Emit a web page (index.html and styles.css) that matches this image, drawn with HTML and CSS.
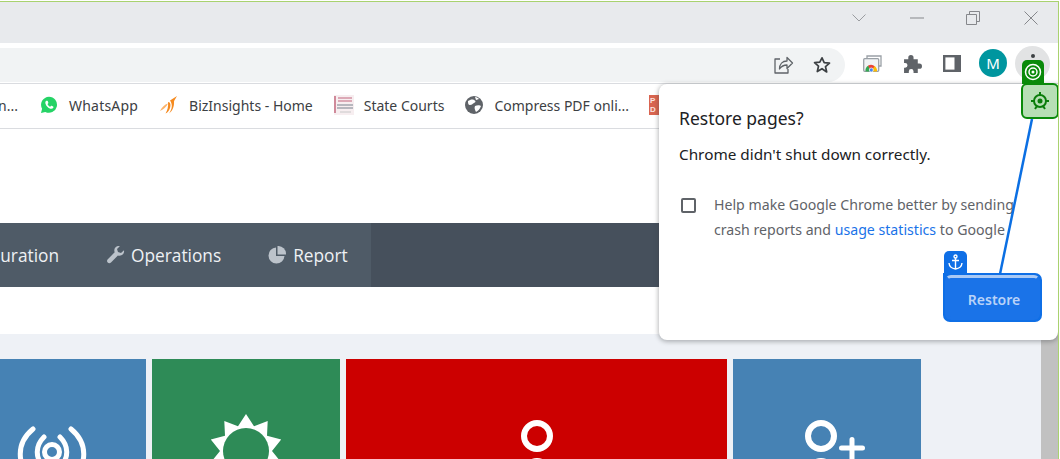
FILE: index.html
```html
<!DOCTYPE html>
<html>
  <head>
    <title>Restore pages?</title>
    <meta name="viewport" content="width=device-width, initial-scale=1.0" />
    <link rel="stylesheet" href="styles.css">
  </head>
  <body>
    <div class="window">
      <!-- title bar -->
      <div class="titlebar">
        <svg class="tb-chevron" width="16" height="10" viewBox="0 0 16 10"><path d="M1.500 1.500 8 8l6.500-6.500" fill="none" stroke="#9a9ca0" stroke-width="1"/></svg>
        <svg class="tb-min" width="14" height="2" viewBox="0 0 14 2"><path d="M0 1h14" stroke="#85878b" stroke-width="1"/></svg>
        <svg class="tb-restore" width="14" height="14" viewBox="0 0 14 14"><path d="M.5 3.500h10v10H.5zM3.500 3.500v-3h10v10h-3" fill="none" stroke="#85878b" stroke-width="1"/></svg>
        <svg class="tb-close" width="14" height="14" viewBox="0 0 14 14"><path d="m.5.5 13 13M13.500.5l-13 13" fill="none" stroke="#85878b" stroke-width="1"/></svg>
      </div>

      <!-- toolbar -->
      <div class="toolbar">
        <div class="omnibox">
          <svg class="omni-share" width="22" height="20" viewBox="0 0 22 20"><path d="M8 4H3v14h13v-4M7.500 14c0-5 3-8 7.500-8V2.500l5.500 5.500-5.500 5.500V10c-3.500 0-5.500 1-7.500 4z" fill="none" stroke="#5f6368" stroke-width="1.300" stroke-linejoin="round"/></svg>
          <svg class="omni-star" width="18" height="18" viewBox="0 0 18 18"><path d="m9 1.800 2.200 4.900 5.300.5-4 3.500 1.200 5.300L9 12.700l-4.700 2.800 1.200-5.300-4-3.500 5.300-.5z" fill="none" stroke="#3c4043" stroke-width="1.700" stroke-linejoin="round"/></svg>
        </div>
        <svg class="tool-media" width="19" height="17" viewBox="0 0 19 17">
          <path d="M4 3V1h14v10h-2" fill="none" stroke="#9aa0a6" stroke-width="1.300"/>
          <rect x=".7" y="3.700" width="15" height="12.600" rx="1" fill="#f1f3f4" stroke="#9aa0a6" stroke-width="1.300"/>
          <path d="M2.500 16.500a6 6 0 0 1 3-6l2.500 6z" fill="#34a853"/>
          <path d="M5 10.800a6 6 0 0 1 7 .7l-3.500 5z" fill="#ea4335"/>
          <path d="M11.500 11a6 6 0 0 1 2.500 5.500H8.500z" fill="#fbbc04"/>
          <circle cx="8.300" cy="15" r="2" fill="#4285f4" stroke="#fff" stroke-width=".7"/>
        </svg>
        <svg class="tool-ext" width="19" height="19" viewBox="0 0 18 18"><path d="M1 5h4V3.500a2.500 2.500 0 0 1 5 0V5h4v4h1.500a2.500 2.500 0 0 1 0 5H14v4h-4v-1.500a2.200 2.200 0 0 0-4.500 0V18H1v-5h1a2.200 2.200 0 0 0 0-4.500H1z" fill="#5f6368"/></svg>
        <svg class="tool-side" width="18" height="17" viewBox="0 0 18 17"><rect x="1.200" y="1.200" width="15.600" height="14.600" fill="#fff" stroke="#5f6368" stroke-width="2.400"/><rect x="11.500" y="1" width="6" height="15" fill="#5f6368"/></svg>
        <div class="avatar">M</div>
        <div class="menu-btn"><span class="menu-dot"></span></div>
      </div>

      <!-- bookmarks -->
      <div class="bookmarks">
        <div class="bm-cut">n...</div>
        <div class="bm bm-whatsapp">
          <svg width="18" height="18" viewBox="0 0 18 18"><path d="M9 .8a8 8 0 0 0-6.900 12L1 17l4.300-1.100A8 8 0 1 0 9 .8z" fill="#25d366"/><path d="M6.300 4.800c-.9.600-1.200 1.700-.8 3 .8 2.400 2.500 4.100 4.900 4.900 1.300.3 2.300 0 2.900-.9.300-.5.200-1-.2-1.200l-1.500-.8c-.3-.1-.6 0-.8.300l-.5.600c-1.200-.4-2.300-1.500-2.800-2.800l.6-.5c.2-.2.300-.5.200-.8l-.6-1.500c-.2-.4-.9-.5-1.400-.3z" fill="#fff"/></svg>
          <span>WhatsApp</span>
        </div>
        <div class="bm bm-biz">
          <svg width="18" height="19" viewBox="0 0 18 19"><path d="M0 15c2-4 4.500-6.500 8-7.500-1.500 3-4 6-8 7.500z" fill="#fbb36b"/><path d="M8 6c2.500 0 3 3 2 6s-2.500 4.500-4.500 5.500c2-3 3-7 2.500-11.500z" fill="#f58a1f"/><path d="M10 4.500 17 0c-1.500 2.500-2.500 4-3 5.500.5 5-2 10-5 12 3-4 4-9 1-13z" fill="#f58a1f"/></svg>
          <span>BizInsights - Home</span>
        </div>
        <div class="bm bm-courts">
          <svg width="20" height="20" viewBox="0 0 20 20"><rect width="20" height="20" fill="#f7eef0"/><rect x="0" y="1" width="2" height="17" fill="#d08a9a"/><path d="M4 3h14M4 6h14" stroke="#d492a2" stroke-width="1.500"/><path d="M3 10h16M3 13h16" stroke="#a3a5ad" stroke-width="1.500"/><path d="M6 17h11" stroke="#c8c8c8" stroke-width="1"/></svg>
          <span>State Courts</span>
        </div>
        <div class="bm bm-globe">
          <svg width="18" height="18" viewBox="0 0 18 18"><circle cx="9" cy="9" r="9" fill="#5f6368"/><path d="M3 5c2-1 4-2 6-1s2 2 0 3-2 2-4 2-2-2-2-4zM10 10c2-1 5-1 6 0-1 3-3 5-5 6-1-2-2-4-1-6zM10 1c2 0 3 1 4 2l-3 1z" fill="#fff"/></svg>
          <span>Compress PDF onli...</span>
        </div>
        <svg class="bm-pdf" width="14" height="20" viewBox="0 0 14 20"><rect width="14" height="20" fill="#d9644f"/><text x="1" y="8" font-size="8" font-weight="700" fill="#fbe3df" font-family="Liberation Sans, sans-serif">P</text><text x="1" y="17" font-size="8" font-weight="700" fill="#fbe3df" font-family="Liberation Sans, sans-serif">D</text></svg>
      </div>

      <!-- page under the bubble -->
      <div class="page">
        <div class="page-main">
          <div class="page-head"></div>
          <div class="nav">
            <div class="nav-items">
              <div class="nav-cut">uration</div>
              <div class="nav-item nav-ops">
                <svg width="18" height="18" viewBox="0 0 18 18"><path d="M17 4.200 14 7l-3-1-1-3 2.800-2.800C10 -.5 7.200 1.400 7.300 4.500c0 .8.200 1.300.4 1.800L.8 13.200c-1 1-1 2.400-.1 3.300s2.300.9 3.300-.1l6.900-6.900c3.200 1 6.800-1.500 6.100-5.300z" fill="#bcc3cb"/></svg>
                <span>Operations</span>
              </div>
              <div class="nav-item nav-report">
                <svg width="18" height="18" viewBox="0 0 18 18"><path d="M8 1.500a8 8 0 1 0 8.500 8.500H8z" fill="#bcc3cb"/><path d="M9.500 0a8 8 0 0 1 8.500 8.500H9.500z" fill="#bcc3cb"/></svg>
                <span>Report</span>
              </div>
            </div>
          </div>
          <div class="page-gap"></div>
          <div class="tiles">
            <div class="tile tile-blue">
              <svg width="80" height="100" viewBox="0 0 80 100"><g fill="none" stroke="#fff" stroke-linecap="round" stroke-width="5"><circle cx="40" cy="38" r="7.500"/><path d="M32 23c-9 9-9 21 0 30M48 23c9 9 9 21 0 30"/><path d="M21 15c-17 14-17 36 0 50M59 15c17 14 17 36 0 50"/></g></svg>
            </div>
            <div class="tile tile-green">
              <svg width="80" height="100" viewBox="0 0 80 100"><path d="M40 0 48 12.300 61.700 7.100 61 21.700 75.200 25.600 66 37 75.200 48.400 61 52.300 61.700 66.900 48 61.700 40 74 32 61.700 18.300 66.900 19 52.300 4.800 48.400 14 37 4.800 25.600 19 21.700 18.300 7.100 32 12.300z" fill="#fff"/><circle cx="40" cy="37" r="23" fill="#2e8b57"/></svg>
            </div>
            <div class="tile tile-red">
              <svg width="80" height="100" viewBox="0 0 80 100"><circle cx="40" cy="22" r="13" fill="none" stroke="#fff" stroke-width="6"/><path d="M28 50c6-8 18-8 24 0v40H28z" fill="#fff"/></svg>
            </div>
            <div class="tile tile-blue">
              <svg width="80" height="100" viewBox="0 0 80 100"><circle cx="34" cy="22" r="13" fill="none" stroke="#fff" stroke-width="6"/><path d="M22 50c6-8 18-8 24 0v40H22z" fill="#fff"/><path d="M54.500 34h21M65 25.500v30" stroke="#fff" stroke-width="5" stroke-linecap="round"/></svg>
            </div>
          </div>
        </div>
        <div class="scrollbar"></div>
      </div>

      <!-- restore bubble -->
      <div class="bubble">
        <div class="bubble-title">Restore pages?</div>
        <div class="bubble-text">Chrome didn't shut down correctly.</div>
        <div class="bubble-check">
          <span class="checkbox"></span>
          <p>Help make Google Chrome better by sending crash reports and <a href="#">usage statistics</a> to Google</p>
        </div>
        <div class="bubble-actions">
          <div class="restore-wrap">
            <button type="button">Restore</button>
          </div>
        </div>
      </div>

      <!-- guide overlay -->
      <svg class="guide-line" width="40" height="160" viewBox="0 0 40 160"><path d="M33 1 1 156" stroke="#0b6fe3" stroke-width="2.500" fill="none"/></svg>
      <div class="anchor-tab">
        <svg width="15" height="16" viewBox="0 0 15 16"><g fill="none" stroke="#fff" stroke-width="1.400"><circle cx="7.500" cy="2.500" r="1.500"/><path d="M7.500 4v11M4 6.500h7M1 9c.3 3.500 3 5.500 6.500 6C11 14.500 13.700 12.500 14 9"/></g></svg>
      </div>
      <div class="target-tab">
        <svg width="18" height="18" viewBox="0 0 18 18"><g fill="none" stroke="#fff" stroke-width="1.500"><circle cx="9" cy="9" r="7.500"/><circle cx="9" cy="9" r="4"/></g><circle cx="9" cy="9" r="1.500" fill="#fff"/></svg>
      </div>
      <div class="target-box">
        <svg width="20" height="20" viewBox="0 0 20 20"><circle cx="10" cy="10" r="6" fill="none" stroke="#0a7d0a" stroke-width="2"/><circle cx="10" cy="10" r="2.500" fill="#0a7d0a"/><path d="M10 1v3M1 10h3M16 10h3M5 18l2-3M15 18l-2-3" stroke="#0a7d0a" stroke-width="2"/></svg>
      </div>
    </div>
  </body>
</html>
```

FILE: styles.css
```css
html,
body {
  margin: 0;
  padding: 0;
  background-color: #fff;
}

body {
  height: 459px;
  padding-top: 1px;
  box-sizing: border-box;
  overflow: hidden;
  font-family: "Noto Sans", Arial, sans-serif;
}

.window {
  position: relative;
  width: 1059px;
  height: 458px;
  box-sizing: border-box;
  border-top: 1px solid #a9d26f;
  border-right: 1px solid #a9d26f;
  display: flex;
  flex-direction: column;
  overflow: hidden;
}

/* title bar */
.titlebar {
  height: 41px;
  flex: none;
  background-color: #e8eaed;
  display: flex;
  justify-content: flex-end;
  align-items: center;
  padding-bottom: 9px;
  box-sizing: border-box;
  padding-right: 20px;
}

.tb-chevron {
  margin-right: 43px;
}

.tb-restore {
  margin-left: 42px;
}

.tb-close {
  margin-left: 44px;
}

/* toolbar */
.toolbar {
  height: 41px;
  flex: none;
  box-sizing: border-box;
  border-bottom: 1px solid #dadce0;
  background-color: #fff;
  display: flex;
  align-items: center;
}

.omnibox {
  width: 845px;
  height: 34px;
  flex: none;
  margin-top: 3px;
  box-sizing: border-box;
  background-color: #f1f3f4;
  border-radius: 0 17px 17px 0;
  display: flex;
  justify-content: flex-end;
  align-items: center;
  padding-right: 14px;
}

.omni-star {
  margin-left: 19px;
}

.tool-media {
  margin-left: 18px;
  flex: none;
}

.tool-ext {
  margin-left: 21px;
  flex: none;
}

.tool-side {
  margin-left: 21px;
  flex: none;
}

.avatar {
  width: 28px;
  height: 28px;
  flex: none;
  margin-left: 18px;
  border-radius: 50%;
  background-color: #00969f;
  color: #fff;
  font-size: 15px;
  line-height: 28px;
  text-align: center;
}

.menu-btn {
  width: 35px;
  height: 35px;
  flex: none;
  margin-left: 8px;
  border-radius: 50%;
  background-color: #e2e3e4;
  display: flex;
  justify-content: center;
  padding-top: 8px;
  box-sizing: border-box;
}

.menu-dot {
  width: 4px;
  height: 4px;
  border-radius: 50%;
  background-color: #3c4043;
}

/* bookmarks */
.bookmarks {
  height: 45px;
  flex: none;
  box-sizing: border-box;
  border-bottom: 1px solid #dadce0;
  padding-bottom: 2px;
  display: flex;
  align-items: center;
  font-size: 14px;
  color: #3c4043;
  white-space: nowrap;
  overflow: hidden;
}

.bm-cut {
  width: 18px;
  flex: none;
  display: flex;
  justify-content: flex-end;
}

.bm {
  display: flex;
  align-items: center;
  gap: 11px;
}

.bm-whatsapp {
  margin-left: 22px;
  letter-spacing: 0.2px;
}

.bm-biz {
  margin-left: 22px;
}

.bm-courts {
  margin-left: 21px;
  gap: 10px;
}

.bm-globe {
  margin-left: 21px;
}

.bm-pdf {
  margin-left: 20px;
  flex: none;
}

/* page */
.page {
  flex: 1;
  min-height: 0;
  display: flex;
}

.page-main {
  flex: 1;
  min-width: 0;
  background-color: #eef1f6;
  overflow: hidden;
}

.scrollbar {
  width: 17px;
  flex: none;
  background-color: #c1c1c1;
}

.page-head {
  height: 94px;
  background-color: #fff;
}

.nav {
  height: 64px;
  background-color: #46505c;
  color: #eef1f4;
  font-family: "Open Sans", Arial, sans-serif;
  font-size: 17.3px;
}

.nav-items {
  width: 371px;
  height: 100%;
  background-color: #4f5b67;
  display: flex;
  align-items: center;
}

.nav-cut {
  width: 59px;
  flex: none;
  display: flex;
  justify-content: flex-end;
  white-space: nowrap;
}

.nav-item {
  display: flex;
  align-items: center;
  gap: 7px;
}

.nav-ops {
  margin-left: 48px;
  gap: 6px;
}

.nav-report {
  margin-left: 47px;
}

.page-gap {
  height: 47px;
  background-color: #fff;
}

.tiles {
  display: grid;
  grid-template-columns: 188px 188px 381px 188px;
  gap: 6px;
  margin: 25px 0 0 -42px;
  height: 200px;
}

.tile {
  display: flex;
  justify-content: center;
  align-items: flex-start;
}

.tile svg {
  margin-top: 55px;
}

.tile-blue {
  background-color: #4682b4;
}

.tile-green {
  background-color: #2e8b57;
}

.tile-red {
  background-color: #cc0000;
}

/* restore bubble */
.bubble {
  position: absolute;
  left: 659px;
  top: 82px;
  width: 399px;
  height: 256px;
  box-sizing: border-box;
  padding: 22px 20px 0;
  background-color: #fff;
  border-radius: 8px 0 8px 8px;
  box-shadow: 0 1px 4px 1px rgba(60, 64, 67, 0.35);
  color: #202124;
}

.bubble-title {
  font-size: 17.5px;
  line-height: 24px;
}

.bubble-text {
  margin-top: 14px;
  font-size: 15.3px;
  line-height: 20px;
}

.bubble-check {
  display: flex;
  margin-top: 28px;
  width: 363px;
  color: #5f6368;
  font-size: 14.15px;
  line-height: 25px;
}

.checkbox {
  width: 11px;
  height: 11px;
  flex: none;
  margin: 6px 18px 0 2px;
  border: 2px solid #5f6368;
  border-radius: 2px;
}

.bubble-check p {
  margin: 0;
}

.bubble-check a {
  color: #1a73e8;
  text-decoration: none;
}

.bubble-actions {
  display: flex;
  justify-content: flex-end;
  margin: 31px -4px 0 0;
}

.restore-wrap {
  width: 99px;
  height: 49px;
  box-sizing: border-box;
  padding: 2px;
  background-color: #0f6fe6;
  border-radius: 0 7px 7px 7px;
}

.restore-wrap button {
  width: 100%;
  height: 100%;
  padding: 3px 0 0 3px;
  border: 3px solid #1a73e8;
  border-top-color: #a9c9f5;
  border-radius: 6px;
  background-color: #1a73e8;
  color: #b9d2f8;
  font-family: "Noto Sans", Arial, sans-serif;
  font-size: 14px;
  font-weight: 600;
}

/* guide overlay */
.guide-line {
  position: absolute;
  left: 999px;
  top: 116px;
}

.anchor-tab {
  position: absolute;
  left: 944px;
  top: 249px;
  width: 23px;
  height: 22px;
  background-color: #0f6fe6;
  border-radius: 5px 5px 0 0;
  display: flex;
  justify-content: center;
  align-items: center;
}

.target-tab {
  position: absolute;
  left: 1022px;
  top: 58px;
  width: 22px;
  height: 24px;
  background-color: #0a8a0a;
  border-radius: 5px 5px 0 0;
  display: flex;
  justify-content: center;
  align-items: center;
}

.target-box {
  position: absolute;
  left: 1021px;
  top: 81px;
  width: 38px;
  height: 36px;
  box-sizing: border-box;
  background-color: #b7dfb5;
  border: 2.5px solid #0a8a0a;
  border-radius: 6px;
  display: flex;
  justify-content: center;
  align-items: center;
}
```
